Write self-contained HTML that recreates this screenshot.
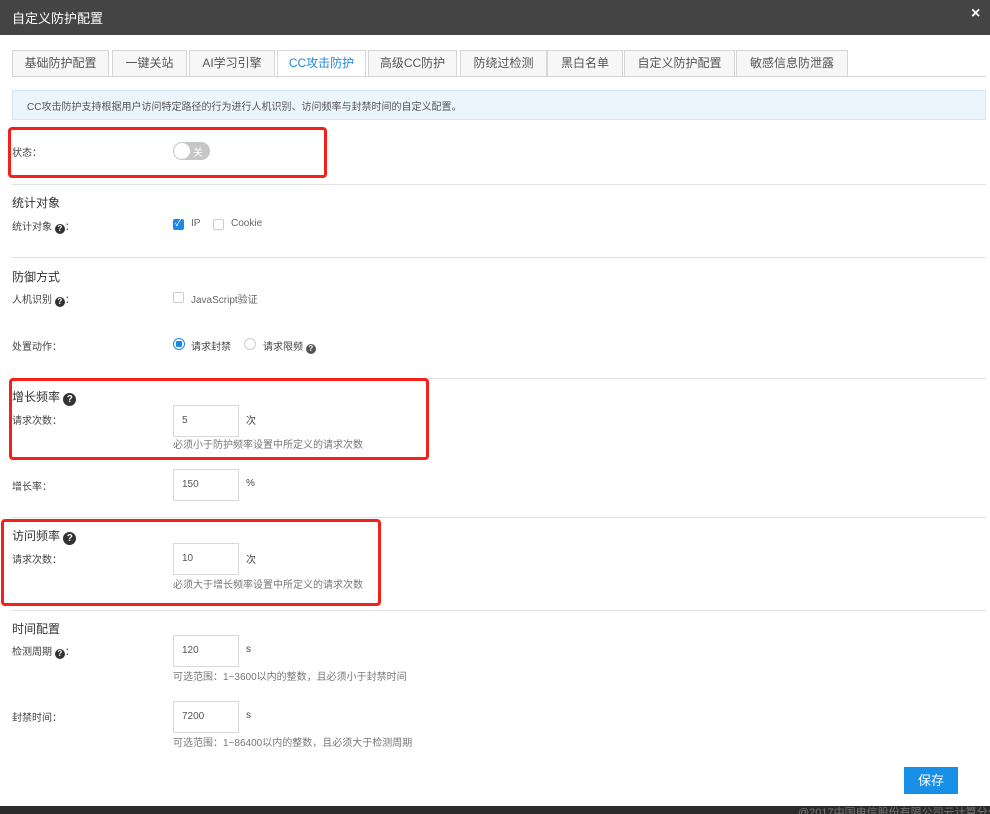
<!DOCTYPE html>
<html><head><meta charset="utf-8"><style>
*{margin:0;padding:0;box-sizing:border-box}
body{width:990px;height:814px;position:relative;overflow:hidden;background:#fff;font-family:"Liberation Sans","Noto Sans CJK SC",sans-serif;color:#333;font-size:10px}
.a{position:absolute;white-space:nowrap}
.hd{left:0;top:0;width:990px;height:35px;background:#444}
.tab{position:absolute;top:50px;height:27px;border:1px solid #d6d6d6;border-bottom:none;background:#f7f7f7;font-size:12px;color:#555;text-align:center;line-height:25px}
.line{position:absolute;left:12px;width:974px;height:1px;background:#e2e2e2}
.h{font-size:12px;color:#333}
.lb{font-size:10px;color:#444}
.inp{position:absolute;width:66px;height:32px;border:1px solid #d9d9d9;font-size:10px;color:#555;padding-left:8px;line-height:30px}
.hint{font-size:10px;color:#777}
.red{position:absolute;border:3px solid #f5201a;border-radius:4px}
.q{display:inline-block;width:10px;height:10px;border-radius:50%;background:#333;color:#fff;font-size:8px;line-height:10px;text-align:center;font-weight:bold;vertical-align:-1px}
.qb{width:13px;height:13px;line-height:13px;font-size:10px}
.cb{position:absolute;width:11px;height:11px;border:1px solid #ccc;border-radius:2px;background:#fff}
</style></head><body>
<div class="a hd"></div>
<div class="a" style="left:12px;top:8px;color:#fff;font-size:13px">自定义防护配置</div>
<div class="a" style="left:971px;top:5px;color:#fff;font-size:16px;font-weight:bold">×</div>

<div class="tab" style="left:12px;width:97px">基础防护配置</div>
<div class="tab" style="left:112px;width:75px">一键关站</div>
<div class="tab" style="left:189px;width:86px">AI学习引擎</div>
<div class="tab" style="left:277px;width:89px;background:#fff;color:#1e88e5;height:28px">CC攻击防护</div>
<div class="tab" style="left:368px;width:89px">高级CC防护</div>
<div class="tab" style="left:460px;width:87px">防绕过检测</div>
<div class="tab" style="left:547px;width:76px">黑白名单</div>
<div class="tab" style="left:624px;width:111px">自定义防护配置</div>
<div class="tab" style="left:736px;width:112px">敏感信息防泄露</div>
<div class="line" style="top:76px;background:#d6d6d6"></div>

<div class="a" style="left:12px;top:90px;width:974px;height:30px;background:#eaf5fc;border:1px solid #cfe7f8"></div>
<div class="a" style="left:27px;top:98px;font-size:10px;color:#555">CC攻击防护支持根据用户访问特定路径的行为进行人机识别、访问频率与封禁时间的自定义配置。</div>

<div class="red" style="left:8px;top:127px;width:319px;height:51px"></div>
<div class="a lb" style="left:12px;top:144px">状态：</div>
<div class="a" style="left:173px;top:142px;width:37px;height:18px;border-radius:9px;background:#c6c6c6"></div>
<div class="a" style="left:174px;top:143px;width:16px;height:16px;border-radius:50%;background:#fff"></div>
<div class="a" style="left:193px;top:144px;color:#fff;font-size:10px">关</div>
<div class="line" style="top:184px"></div>

<div class="a h" style="left:12px;top:194px">统计对象</div>
<div class="a lb" style="left:12px;top:218px">统计对象 <span class="q">?</span>：</div>
<div class="cb" style="left:173px;top:219px;background:#1e88e5;border-color:#1e88e5"></div>
<div class="a" style="left:175px;top:216px;color:#fff;font-size:9px">✓</div>
<div class="a lb" style="left:191px;top:218px;color:#666">IP</div>
<div class="cb" style="left:213px;top:219px"></div>
<div class="a lb" style="left:231px;top:218px;color:#666">Cookie</div>
<div class="line" style="top:257px"></div>

<div class="a h" style="left:12px;top:268px">防御方式</div>
<div class="a lb" style="left:12px;top:291px">人机识别 <span class="q">?</span>：</div>
<div class="cb" style="left:173px;top:292px"></div>
<div class="a lb" style="left:191px;top:291px;color:#666">JavaScript验证</div>
<div class="a lb" style="left:12px;top:338px">处置动作：</div>
<div class="a" style="left:173px;top:338px;width:12px;height:12px;border-radius:50%;border:1px solid #1e88e5"></div>
<div class="a" style="left:176px;top:341px;width:6px;height:6px;background:#1e88e5;border-radius:1px"></div>
<div class="a lb" style="left:191px;top:338px">请求封禁</div>
<div class="a" style="left:244px;top:338px;width:12px;height:12px;border-radius:50%;border:1px solid #ccc"></div>
<div class="a lb" style="left:263px;top:338px">请求限频 <span class="q" style="background:#555">?</span></div>
<div class="line" style="top:378px"></div>

<div class="red" style="left:9px;top:378px;width:420px;height:82px"></div>
<div class="a h" style="left:12px;top:388px">增长频率 <span class="q qb">?</span></div>
<div class="inp" style="left:173px;top:405px">5</div>
<div class="a lb" style="left:12px;top:412px">请求次数：</div>
<div class="a lb" style="left:246px;top:412px">次</div>
<div class="a hint" style="left:173px;top:436px">必须小于防护频率设置中所定义的请求次数</div>
<div class="inp" style="left:173px;top:469px">150</div>
<div class="a lb" style="left:12px;top:478px">增长率：</div>
<div class="a lb" style="left:246px;top:478px">%</div>
<div class="line" style="top:517px"></div>

<div class="red" style="left:1px;top:519px;width:380px;height:87px"></div>
<div class="a h" style="left:12px;top:527px">访问频率 <span class="q qb">?</span></div>
<div class="inp" style="left:173px;top:543px">10</div>
<div class="a lb" style="left:12px;top:551px">请求次数：</div>
<div class="a lb" style="left:246px;top:551px">次</div>
<div class="a hint" style="left:173px;top:576px">必须大于增长频率设置中所定义的请求次数</div>
<div class="line" style="top:610px"></div>

<div class="a h" style="left:12px;top:620px">时间配置</div>
<div class="inp" style="left:173px;top:635px">120</div>
<div class="a lb" style="left:12px;top:643px">检测周期 <span class="q">?</span>：</div>
<div class="a lb" style="left:246px;top:644px">s</div>
<div class="a hint" style="left:173px;top:668px">可选范围：1~3600以内的整数，且必须小于封禁时间</div>
<div class="inp" style="left:173px;top:701px">7200</div>
<div class="a lb" style="left:12px;top:709px">封禁时间：</div>
<div class="a lb" style="left:246px;top:710px">s</div>
<div class="a hint" style="left:173px;top:734px">可选范围：1~86400以内的整数，且必须大于检测周期</div>

<div class="a" style="left:904px;top:767px;width:54px;height:27px;background:#1890e8;color:#fff;font-size:13px;text-align:center;line-height:27px">保存</div>
<div class="a" style="left:0;top:806px;width:990px;height:8px;background:#2b2b2b;overflow:hidden"><div class="a" style="left:798px;top:-2px;color:#777;font-size:11px">@2017中国电信股份有限公司云计算分公司</div></div>
</body></html>
